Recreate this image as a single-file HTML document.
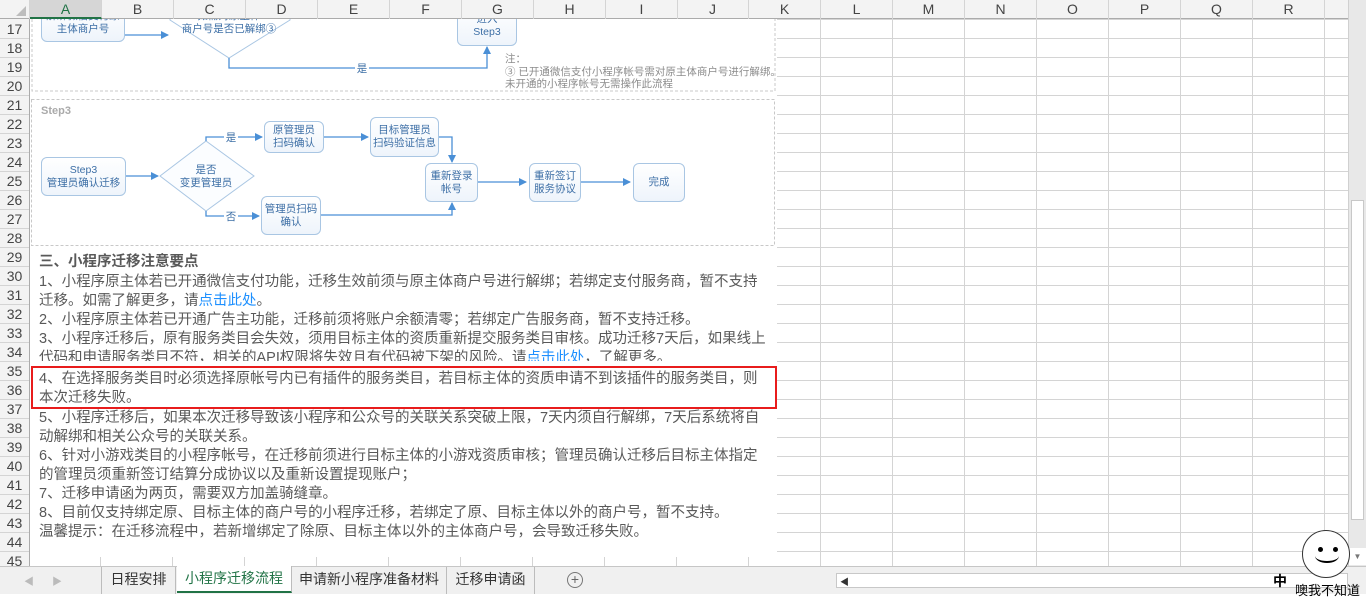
<!DOCTYPE html>
<html><head><meta charset="utf-8">
<style>
*{margin:0;padding:0;box-sizing:border-box}
body{width:1366px;height:594px;overflow:hidden;background:#fff;font-family:"Liberation Sans","Noto Sans CJK SC",sans-serif;position:relative}
.a{position:absolute}
#colh{left:0;top:0;width:1348px;height:19px;background:#f3f3f3;border-bottom:1px solid #ababab;z-index:10}
.ch{position:absolute;top:0;height:19px;width:72px;text-align:center;font-size:14px;line-height:18px;color:#444;border-right:1px solid #d4d4d4}
#rowh{left:0;top:19px;width:30px;height:547px;background:#f3f3f3;border-right:1px solid #ababab;z-index:10}
.rh{position:absolute;left:0;width:29px;height:19px;text-align:center;font-size:14px;line-height:19px;color:#444;border-bottom:1px solid #d4d4d4}
#grid{left:30px;top:19px;width:1318px;height:547px;
background-image:linear-gradient(to right,transparent 71px,#d4d4d4 71px),linear-gradient(to bottom,transparent 18px,#d4d4d4 18px);
background-size:72px 19px,72px 19px;background-position:-1px 0,0 1px}
#img{left:30px;top:19px;width:747px;height:538px;background:#fff}
.box{position:absolute;border:1px solid #a9c6e3;border-radius:6px;background:linear-gradient(#fff,#eef4fb);color:#3d6fa6;font-size:10.5px;line-height:13px;text-align:center;display:flex;align-items:center;justify-content:center}
.t{position:absolute;left:39px;font-size:14.5px;color:#595959;white-space:nowrap;line-height:19px}
.lk{color:#1e90ff}
#tabs{left:0;top:566px;width:1366px;height:28px;background:#f0f0f0;border-top:1px solid #c6c6c6;z-index:10}
.tab{position:absolute;top:0;height:27px;font-size:14px;line-height:25px;color:#333;text-align:center;border-right:1px solid #bcbcbc}
</style></head><body>
<div id="grid" class="a"></div>
<div id="colh" class="a">
<div class="a" style="left:0;top:0;width:30px;height:19px;border-right:1px solid #d4d4d4"><div class="a" style="right:3px;bottom:3px;width:0;height:0;border-left:10px solid transparent;border-bottom:10px solid #bdbdbd"></div></div>
<div class="ch" style="left:30px;background:#d6d6d6;border-bottom:2px solid #217346;color:#217346">A</div>
<div class="ch" style="left:102px">B</div><div class="ch" style="left:174px">C</div><div class="ch" style="left:246px">D</div><div class="ch" style="left:318px">E</div><div class="ch" style="left:390px">F</div><div class="ch" style="left:462px">G</div><div class="ch" style="left:534px">H</div><div class="ch" style="left:606px">I</div><div class="ch" style="left:677px">J</div><div class="ch" style="left:749px">K</div><div class="ch" style="left:821px">L</div><div class="ch" style="left:893px">M</div><div class="ch" style="left:965px">N</div><div class="ch" style="left:1037px">O</div><div class="ch" style="left:1109px">P</div><div class="ch" style="left:1181px">Q</div><div class="ch" style="left:1253px">R</div><div class="ch" style="left:1325px"></div>
</div>
<div id="rowh" class="a">
<div class="rh" style="top:1px">17</div><div class="rh" style="top:20px">18</div><div class="rh" style="top:39px">19</div><div class="rh" style="top:58px">20</div><div class="rh" style="top:77px">21</div><div class="rh" style="top:96px">22</div><div class="rh" style="top:115px">23</div><div class="rh" style="top:134px">24</div><div class="rh" style="top:153px">25</div><div class="rh" style="top:172px">26</div><div class="rh" style="top:191px">27</div><div class="rh" style="top:210px">28</div><div class="rh" style="top:229px">29</div><div class="rh" style="top:248px">30</div><div class="rh" style="top:267px">31</div><div class="rh" style="top:286px">32</div><div class="rh" style="top:305px">33</div><div class="rh" style="top:324px">34</div><div class="rh" style="top:343px">35</div><div class="rh" style="top:362px">36</div><div class="rh" style="top:381px">37</div><div class="rh" style="top:400px">38</div><div class="rh" style="top:419px">39</div><div class="rh" style="top:438px">40</div><div class="rh" style="top:457px">41</div><div class="rh" style="top:476px">42</div><div class="rh" style="top:495px">43</div><div class="rh" style="top:514px">44</div><div class="rh" style="top:533px">45</div>
</div>
<div id="img" class="a"></div>

<svg class="a" style="left:0;top:0" width="790" height="260">
<defs><marker id="ar" markerWidth="8" markerHeight="8" refX="7" refY="4" orient="auto" markerUnits="userSpaceOnUse"><path d="M0,0 L8,4 L0,8z" fill="#4a8fd6"/></marker></defs>
<g fill="none" stroke="#c8c8c8" stroke-dasharray="3,2">
<path d="M32,19 V91 H775 V19"/>
<rect x="31.5" y="99.5" width="743" height="146"/>
</g>
<path d="M170,0 L290,0 L290,20 L229,58 L170,20 Z" fill="#fff" stroke="#a9c6e3"/>
<path d="M160,176 L206,141 L254,176 L206,211 Z" fill="#fbfdff" stroke="#a9c6e3"/>
<g stroke="#4a8fd6" stroke-width="1.3" fill="none">
<path d="M125,35 H168" marker-end="url(#ar)"/>
<path d="M229,58 V68 H487 V47" marker-end="url(#ar)"/>
<path d="M126,176 H158" marker-end="url(#ar)"/>
<path d="M206,141 V137 H262" marker-end="url(#ar)"/>
<path d="M324,137 H368" marker-end="url(#ar)"/>
<path d="M439,137 H452 V162" marker-end="url(#ar)"/>
<path d="M206,211 V216 H259" marker-end="url(#ar)"/>
<path d="M321,215 H452 V203" marker-end="url(#ar)"/>
<path d="M478,182 H526" marker-end="url(#ar)"/>
<path d="M581,182 H630" marker-end="url(#ar)"/>
</g>
<g font-size="10.5" fill="#3d6fa6" text-anchor="middle" font-family="Liberation Sans,Noto Sans CJK SC,sans-serif">
<rect x="355" y="61" width="14" height="13" fill="#fff"/><text x="362" y="72">是</text>
<rect x="224" y="130" width="14" height="13" fill="#fff"/><text x="231" y="141">是</text>
<rect x="224" y="209" width="14" height="13" fill="#fff"/><text x="231" y="220">否</text>
<text x="229" y="19">如需对原主体</text>
<text x="229" y="32">商户号是否已解绑③</text>
<text x="206" y="173">是否</text><text x="206" y="186">变更管理员</text>
</g>
<g font-size="10.5" fill="#8c8c8c" font-family="Liberation Sans,Noto Sans CJK SC,sans-serif">
<text x="505" y="62">注：</text>
<text x="505" y="75">③ 已开通微信支付小程序帐号需对原主体商户号进行解绑。</text>
<text x="505" y="87">未开通的小程序帐号无需操作此流程</text>
<text x="41" y="114" font-weight="bold" fill="#aaa" font-size="11">Step3</text>
</g>
</svg>
<div class="box" style="left:41px;top:4px;width:84px;height:38px">解绑微信支付原<br>主体商户号</div>
<div class="box" style="left:457px;top:6px;width:60px;height:40px">进入<br>Step3</div>
<div class="box" style="left:41px;top:157px;width:85px;height:39px">Step3<br>管理员确认迁移</div>
<div class="box" style="left:264px;top:121px;width:60px;height:32px">原管理员<br>扫码确认</div>
<div class="box" style="left:370px;top:117px;width:69px;height:40px">目标管理员<br>扫码验证信息</div>
<div class="box" style="left:261px;top:196px;width:60px;height:39px">管理员扫码<br>确认</div>
<div class="box" style="left:425px;top:163px;width:53px;height:39px">重新登录<br>帐号</div>
<div class="box" style="left:529px;top:163px;width:52px;height:39px">重新签订<br>服务协议</div>
<div class="box" style="left:633px;top:163px;width:52px;height:39px">完成</div>

<div class="t" style="top:253px;font-weight:bold">三、小程序迁移注意要点</div>
<div class="t" style="top:273px">1、小程序原主体若已开通微信支付功能，迁移生效前须与原主体商户号进行解绑；若绑定支付服务商，暂不支持</div>
<div class="t" style="top:292px">迁移。如需了解更多，请<span class="lk">点击此处</span>。</div>
<div class="t" style="top:311px">2、小程序原主体若已开通广告主功能，迁移前须将账户余额清零；若绑定广告服务商，暂不支持迁移。</div>
<div class="t" style="top:330px">3、小程序迁移后，原有服务类目会失效，须用目标主体的资质重新提交服务类目审核。成功迁移7天后，如果线上</div>
<div class="t" style="top:349px;height:12px;overflow:hidden">代码和申请服务类目不符，相关的API权限将失效且有代码被下架的风险。请<span class="lk">点击此处</span>，了解更多。</div>
<div class="t" style="top:370px">4、在选择服务类目时必须选择原帐号内已有插件的服务类目，若目标主体的资质申请不到该插件的服务类目，则</div>
<div class="t" style="top:389px">本次迁移失败。</div>
<div class="t" style="top:409px">5、小程序迁移后，如果本次迁移导致该小程序和公众号的关联关系突破上限，7天内须自行解绑，7天后系统将自</div>
<div class="t" style="top:428px">动解绑和相关公众号的关联关系。</div>
<div class="t" style="top:447px">6、针对小游戏类目的小程序帐号，在迁移前须进行目标主体的小游戏资质审核；管理员确认迁移后目标主体指定</div>
<div class="t" style="top:466px">的管理员须重新签订结算分成协议以及重新设置提现账户；</div>
<div class="t" style="top:485px">7、迁移申请函为两页，需要双方加盖骑缝章。</div>
<div class="t" style="top:504px">8、目前仅支持绑定原、目标主体的商户号的小程序迁移，若绑定了原、目标主体以外的商户号，暂不支持。</div>
<div class="t" style="top:523px">温馨提示：在迁移流程中，若新增绑定了除原、目标主体以外的主体商户号，会导致迁移失败。</div>
<div class="a" style="left:31px;top:366px;width:746px;height:43px;border:2px solid #e81c1c"></div>

<div class="a" style="left:1348px;top:0;width:18px;height:566px;background:#e8e8e8;border-left:1px solid #d0d0d0;z-index:10">
<div class="a" style="left:2px;top:200px;width:13px;height:320px;background:#fff;border:1px solid #c8c8c8"></div>
<div class="a" style="left:0;top:548px;width:17px;height:17px;background:#fff;font-size:8px;color:#777;text-align:center;line-height:17px">▼</div>
</div>

<div id="tabs" class="a">
<div class="a" style="left:24px;top:6px;font-size:10px;color:#bbb">◀</div>
<div class="a" style="left:52px;top:6px;font-size:10px;color:#bbb">▶</div>
<div class="tab" style="left:86px;width:16px"></div>
<div class="tab" style="left:102px;width:74px">日程安排</div>
<div class="tab" style="left:177px;width:115px;background:#fff;color:#217346;border-bottom:2px solid #217346;top:-1px">小程序迁移流程</div>
<div class="tab" style="left:292px;width:155px">申请新小程序准备材料</div>
<div class="tab" style="left:447px;width:88px">迁移申请函</div>
<div class="a" style="left:567px;top:5px;width:16px;height:16px;border:1px solid #777;border-radius:50%;font-size:14px;line-height:13px;text-align:center;color:#666">+</div>
<div class="a" style="left:836px;top:6px;width:512px;height:15px;background:#fff;border:1px solid #c8c8c8"><span class="a" style="left:3px;top:1px;font-size:9px;color:#333">◀</span></div>
<div class="a" style="left:1273px;top:4px;font-size:14px;font-weight:bold;color:#000">中</div>
</div>
<div class="a" style="left:1302px;top:530px;width:48px;height:48px;border:1px solid #333;border-radius:50%;background:#fff;z-index:11">
<div class="a" style="left:15px;top:16px;width:5px;height:5px;background:#000;border-radius:50%"></div>
<div class="a" style="left:30px;top:16px;width:5px;height:5px;background:#000;border-radius:50%"></div>
<div class="a" style="left:12px;top:18px;width:24px;height:14px;border-bottom:2px solid #000;border-radius:0 0 50% 50%"></div>
</div>
<div class="a" style="left:1295px;top:580px;font-size:13px;color:#000;white-space:nowrap;z-index:11">噢我不知道</div>
</body></html>
